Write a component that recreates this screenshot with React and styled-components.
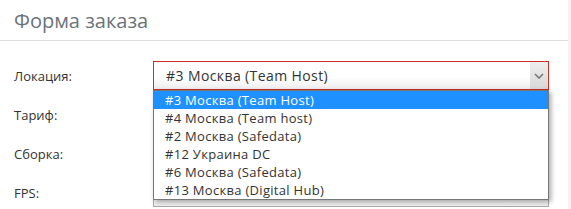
import React from 'react';
import styled, { createGlobalStyle } from 'styled-components';

const GlobalStyle = createGlobalStyle`
    body {
        margin: 0;
        background: #f7f1f2;
        font-family: "Open Sans", "Noto Sans", sans-serif;
    }
`;

const Card = styled.div`
    width: 568px;
    height: 209px;
    background: #fff;
    overflow: hidden;
`;
const CardHeader = styled.div`
    height: 40px;
    border-bottom: 1px solid #dedede;
    padding-left: 14px;
    display: flex;
    align-items: center;
`;
const Title = styled.h3`
    margin: 0;
    font-weight: 400;
    font-size: 20px;
    color: #6b737a;
`;
const CardBody = styled.div`
    padding: 20px 19px 0 14px;
    display: flex;
    flex-direction: column;
    gap: 10px;
`;
const Row = styled.div`
    display: grid;
    grid-template-columns: 139px 396px;
    align-items: center;
    height: 29px;
`;
const Label = styled.label`
    font-size: 13px;
    color: #333;
`;
const SelectWrap = styled.div`
    position: relative;
    height: 29px;
`;
const SelectBox = styled.div`
    box-sizing: border-box;
    height: 29px;
    border: 1px solid ${props => (props.$active ? '#c9302c' : '#aaa')};
    background: linear-gradient(#fff 55%, #eee);
    display: flex;
    align-items: center;
    justify-content: space-between;
    font-size: 14px;
    letter-spacing: 0.4px;
    color: #333;
    padding-left: 12px;
`;
const Arrow = styled.div`
    width: 18px;
    align-self: stretch;
    background: linear-gradient(#eee, #d8d8d8);
    display: flex;
    align-items: center;
    justify-content: center;
`;
const Dropdown = styled.ul`
    position: absolute;
    z-index: 2;
    top: 29px;
    left: 0;
    right: 0;
    margin: 0;
    padding: 0;
    list-style: none;
    background: #fff;
    border: 1px solid #767676;
    box-shadow: 2px 2px 5px rgba(0, 0, 0, 0.35);
`;
const Option = styled.li`
    height: 18px;
    line-height: 18px;
    padding-left: 11px;
    font-size: 13px;
    letter-spacing: 0.3px;
    color: ${props => (props.$selected ? '#fff' : '#333')};
    background: ${props => (props.$selected ? '#1e90ff' : 'transparent')};
    white-space: nowrap;
`;

const locations = [
    '#3 Москва (Team Host)',
    '#4 Москва (Team host)',
    '#2 Москва (Safedata)',
    '#12 Украина DC',
    '#6 Москва (Safedata)',
    '#13 Москва (Digital Hub)',
];

const Chevron = () => (
    <svg width="10" height="6" viewBox="0 0 10 6">
        <path d="M1 1l4 4 4-4" fill="none" stroke="#777" strokeWidth="1.6" />
    </svg>
);

const App = () => {
    return (
        <>
            <GlobalStyle />
            <Card>
                <CardHeader>
                    <Title>Форма заказа</Title>
                </CardHeader>
                <CardBody>
                    <Row>
                        <Label>Локация:</Label>
                        <SelectWrap>
                            <SelectBox $active>
                                {locations[0]}
                                <Arrow><Chevron /></Arrow>
                            </SelectBox>
                            <Dropdown>
                                {locations.map((loc, i) => (
                                    <Option key={loc} $selected={i === 0}>{loc}</Option>
                                ))}
                            </Dropdown>
                        </SelectWrap>
                    </Row>
                    <Row>
                        <Label>Тариф:</Label>
                        <SelectWrap><SelectBox /></SelectWrap>
                    </Row>
                    <Row>
                        <Label>Сборка:</Label>
                        <SelectWrap><SelectBox /></SelectWrap>
                    </Row>
                    <Row>
                        <Label>FPS:</Label>
                        <SelectWrap><SelectBox /></SelectWrap>
                    </Row>
                </CardBody>
            </Card>
        </>
    );
};

export default App;
